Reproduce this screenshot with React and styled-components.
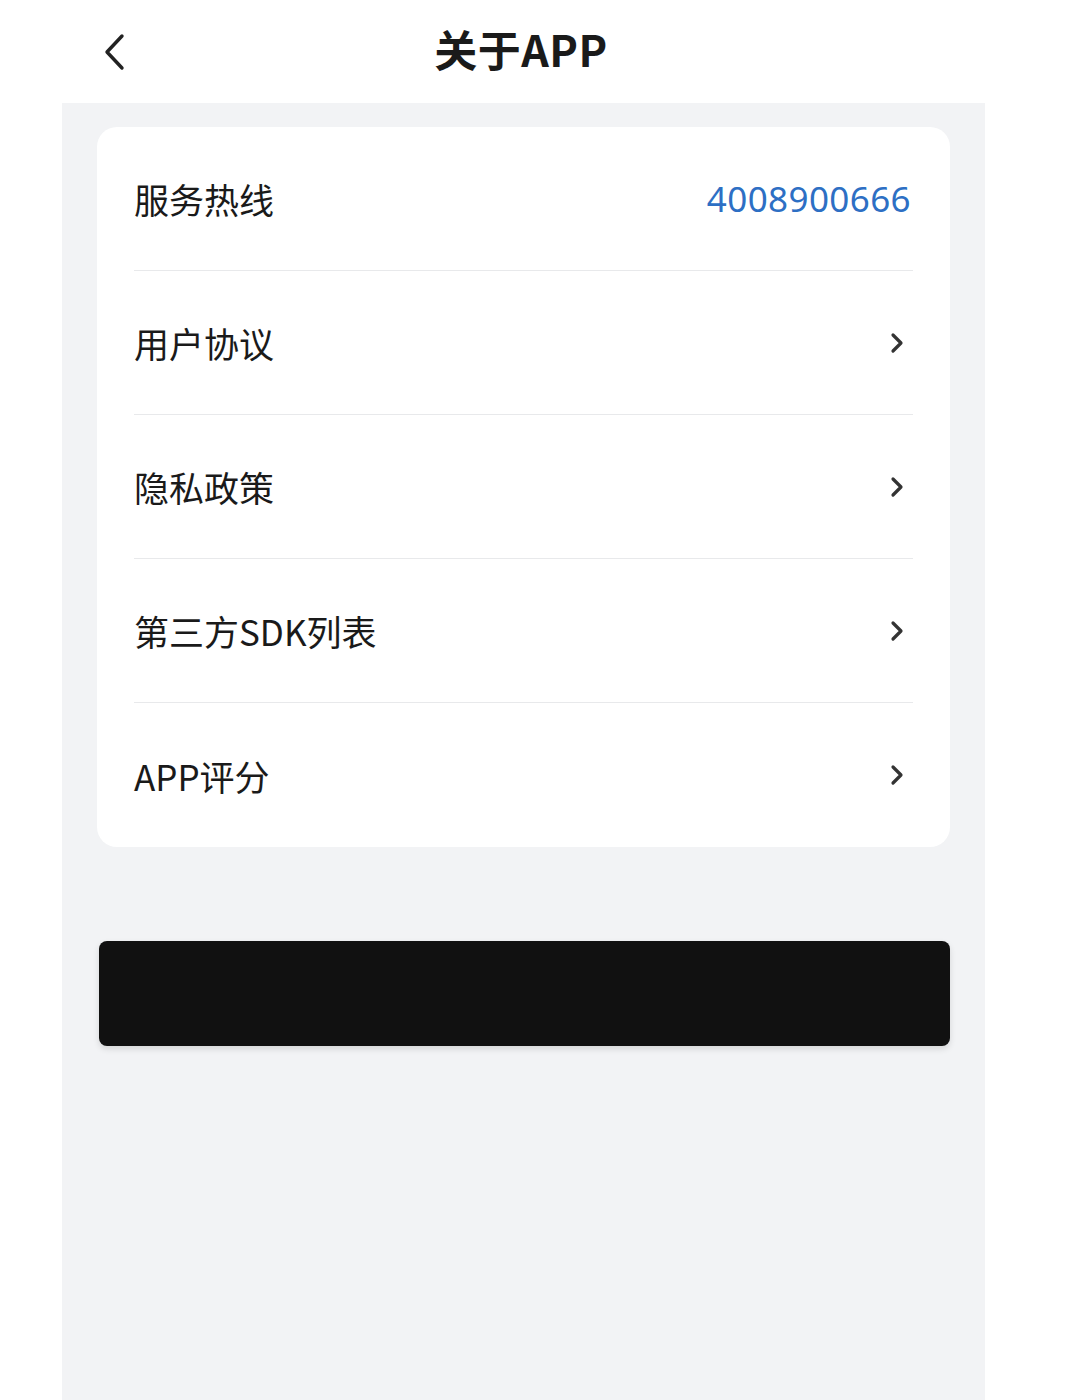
import React from 'react';
import styled, { createGlobalStyle } from 'styled-components';

const GlobalStyle = createGlobalStyle`
	body {
		margin: 0;
		background: #ffffff;
		font-family: 'Noto Sans', 'Noto Sans CJK SC', sans-serif;
		color: #1a1a1a;
	}
`;

const Page = styled.div`
	width: 1080px;
	min-height: 1400px;
	display: flex;
	flex-direction: column;
`;

const Header = styled.header`
	height: 103px;
	display: grid;
	grid-template-columns: 1fr auto 1fr;
	align-items: center;
	padding: 0 0 6px 100px;
	margin-right: 138px;
	box-sizing: border-box;
`;

const BackButton = styled.button`
	justify-self: start;
	width: 32px;
	height: 40px;
	padding: 0;
	border: none;
	background: none;
	display: flex;
	align-items: center;
	cursor: pointer;
	transform: translateY(3px);
`;

const Title = styled.h1`
	margin: 0;
	font-family: 'Noto Sans CJK SC', sans-serif;
	font-size: 43px;
	line-height: 1;
	font-weight: 700;
	color: #1a1a1a;
	letter-spacing: 0.5px;
`;

const Panel = styled.main`
	margin-left: 62px;
	width: 923px;
	flex: 1;
	background: #f2f3f5;
	padding: 24px 35px 0;
	box-sizing: border-box;
	display: flex;
	flex-direction: column;
	gap: 94px;
`;

const Card = styled.section`
	background: #ffffff;
	border-radius: 20px;
	padding: 0 37px;
`;

const Row = styled.div`
	height: 144px;
	display: flex;
	align-items: center;
	justify-content: space-between;
	border-bottom: ${(p) => (p.last ? 'none' : '1.5px solid #e8e9eb')};
	box-sizing: border-box;
	cursor: pointer;
`;

const Label = styled.span`
	font-family: 'Noto Sans CJK SC', sans-serif;
	font-size: 35px;
	color: #1a1a1a;
`;

const Phone = styled.span`
	font-family: 'Noto Sans', sans-serif;
	font-size: 35px;
	color: #2d6fc4;
	letter-spacing: 0.4px;
	margin-right: 2px;
`;

const Arrow = styled.span`
	display: flex;
	margin-right: 8px;
`;

const Submit = styled.button`
	height: 105px;
	margin-left: 2px;
	border: none;
	border-radius: 8px;
	background: #111111;
	box-shadow: 0 3px 6px rgba(0, 0, 0, 0.12);
	cursor: pointer;
`;

function Chevron() {
	return (
		<svg width='16' height='22' viewBox='0 0 16 22'>
			<path d='M4 3 L12 11 L4 19' fill='none' stroke='#333' strokeWidth='3.2' strokeLinecap='round' strokeLinejoin='round' />
		</svg>
	);
}

const items = ['用户协议', '隐私政策', '第三方SDK列表', 'APP评分'];

function App() {
	return (
		<Page>
			<GlobalStyle />
			<Header>
				<BackButton aria-label='返回'>
					<svg width='28' height='40' viewBox='0 0 28 40'>
						<path d='M22 4 L7 20 L22 36' fill='none' stroke='#222' strokeWidth='3.4' strokeLinecap='round' strokeLinejoin='round' />
					</svg>
				</BackButton>
				<Title>关于APP</Title>
				<span />
			</Header>
			<Panel>
				<Card>
					<Row>
						<Label>服务热线</Label>
						<Phone>4008900666</Phone>
					</Row>
					{items.map((t, i) => (
						<Row key={t} last={i === items.length - 1}>
							<Label>{t}</Label>
							<Arrow>
								<Chevron />
							</Arrow>
						</Row>
					))}
				</Card>
				<Submit aria-label='退出登录' />
			</Panel>
		</Page>
	);
}

export default App;
